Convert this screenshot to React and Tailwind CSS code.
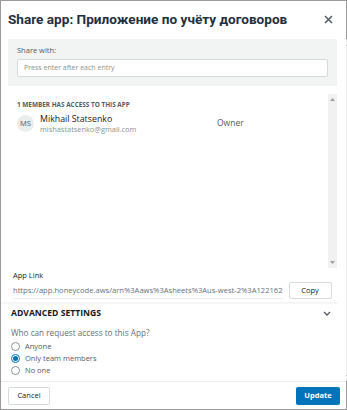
import React from "react";

const font = { fontFamily: '"Open Sans", "Noto Sans", sans-serif' };
const titleFont = { fontFamily: '"Liberation Sans Narrow", Roboto, "Noto Sans", sans-serif' };

const Radio = ({ label, checked }) => (
  <label className="flex h-[12px] items-center gap-[5px] text-[7.5px] text-[#545b64]">
    <span
      className={
        "flex h-[9px] w-[9px] items-center justify-center rounded-full border " +
        (checked ? "border-[#0073bb]" : "border-[#879596]")
      }
    >
      {checked && <span className="h-[5px] w-[5px] rounded-full bg-[#0073bb]" />}
    </span>
    {label}
  </label>
);

const Arrow = ({ up }) => (
  <svg width="5" height="3" viewBox="0 0 5 3">
    <path d={up ? "M0 3 L2.5 0 L5 3 Z" : "M0 0 L2.5 3 L5 0 Z"} fill="#a0a0a0" />
  </svg>
);

export default function App() {
  return (
    <div style={font} className="flex h-[410px] w-[347px] flex-col border border-[#9a9a9a] bg-white text-[#16191f]">
      {/* header */}
      <div className="flex h-[38px] shrink-0 items-center justify-between pb-[1px] pl-[7px] pr-[13px]">
        <h3 style={titleFont} className="whitespace-nowrap text-[13.6px] font-bold text-[#232f3e]">
          Share app: Приложение по учёту договоров
        </h3>
        <svg width="9" height="9" viewBox="0 0 9 9">
          <path d="M1 1 L8 8 M8 1 L1 8" stroke="#545b64" strokeWidth="1.5" />
        </svg>
      </div>

      {/* body */}
      <div className="flex min-h-0 flex-1">
        <div className="flex flex-1 flex-col">
          <div className="ml-[7px] mr-[9px] h-[47px] bg-[#f2f3f3] px-[9px] pt-[6px]">
            <div className="text-[7.5px] text-[#545b64]">Share with:</div>
            <div className="mt-[3px] flex h-[18px] items-center rounded-[2px] border border-[#d5dbdb] bg-white px-[6px] text-[7px] text-[#879596]">
              Press enter after each entry
            </div>
          </div>

          <div className="ml-[7px] mr-[9px] mt-[8px] flex h-[174px]">
            <div className="flex-1 pl-[9px] pt-[6px]">
              <div className="text-[6.4px] font-bold text-[#545b64]">1 MEMBER HAS ACCESS TO THIS APP</div>
              <div className="mt-[4px] flex items-center">
                <div className="flex h-[17px] w-[17px] items-center justify-center rounded-full bg-[#eaeded] text-[7.5px] text-[#545b64]">MS</div>
                <div className="ml-[6px] w-[177px]">
                  <div className="text-[8.8px] leading-[10px] text-[#16191f]">Mikhail Statsenko</div>
                  <div className="text-[7.4px] leading-[10px] text-[#879596]">mishastatsenko@gmail.com</div>
                </div>
                <div className="text-[8.5px] text-[#545b64]">Owner</div>
              </div>
            </div>
            <div className="flex w-[9px] flex-col items-center justify-between bg-[#f1f1f1] py-[4px]">
              <Arrow up />
              <Arrow />
            </div>
          </div>

          <div className="ml-[12px] mr-[14px] mt-[2px]">
            <div className="text-[7.5px] text-[#16191f]">App Link</div>
            <div className="mt-[1px] flex items-center gap-[6px]">
              <div className="flex h-[17px] flex-1 items-center overflow-hidden whitespace-nowrap border-b border-[#eaeded] text-[7.6px] text-[#687078]">
                https://app.honeycode.aws/arn%3Aaws%3Asheets%3Aus-west-2%3A122162
              </div>
              <button className="h-[17px] w-[43px] rounded-[2px] border border-[#d5dbdb] bg-white text-[7.5px] text-[#16191f]">Copy</button>
            </div>
          </div>

          <div className="mr-[8px] mt-[3px] h-[2px] bg-[#f6f6f6]" />

          <div className="pl-[10px] pr-[15px] pt-[3px]">
            <div className="flex items-center justify-between">
              <div className="text-[8.6px] font-bold text-[#16191f]">ADVANCED SETTINGS</div>
              <svg width="8" height="5" viewBox="0 0 8 5">
                <path d="M1 1 L4 4 L7 1" stroke="#545b64" strokeWidth="1.3" fill="none" />
              </svg>
            </div>
            <div className="mt-[7px] text-[8.2px] text-[#687078]">Who can request access to this App?</div>
            <div className="mt-[1px] flex flex-col">
              <Radio label="Anyone" />
              <Radio label="Only team members" checked />
              <Radio label="No one" />
            </div>
          </div>
        </div>

        {/* page scrollbar */}
        <div className="flex w-[8px] flex-col bg-[#f0f0f0]">
          <div className="flex h-[10px] items-center justify-center"><Arrow up /></div>
          <div className="mx-[1px] h-[305px] bg-[#c1c1c1]" />
          <div className="flex-1" />
          <div className="flex h-[10px] items-center justify-center"><Arrow /></div>
        </div>
      </div>

      {/* footer */}
      <div className="flex h-[28px] shrink-0 items-center justify-between border-t border-[#eaeded] pl-[7px] pr-[6px]">
        <button className="h-[18px] w-[42px] rounded-[2px] border border-[#d5dbdb] bg-white text-[7.5px] text-[#16191f]">Cancel</button>
        <button className="h-[18px] w-[44px] rounded-[2px] bg-[#0073bb] text-[7.5px] font-bold text-white">Update</button>
      </div>
    </div>
  );
}
